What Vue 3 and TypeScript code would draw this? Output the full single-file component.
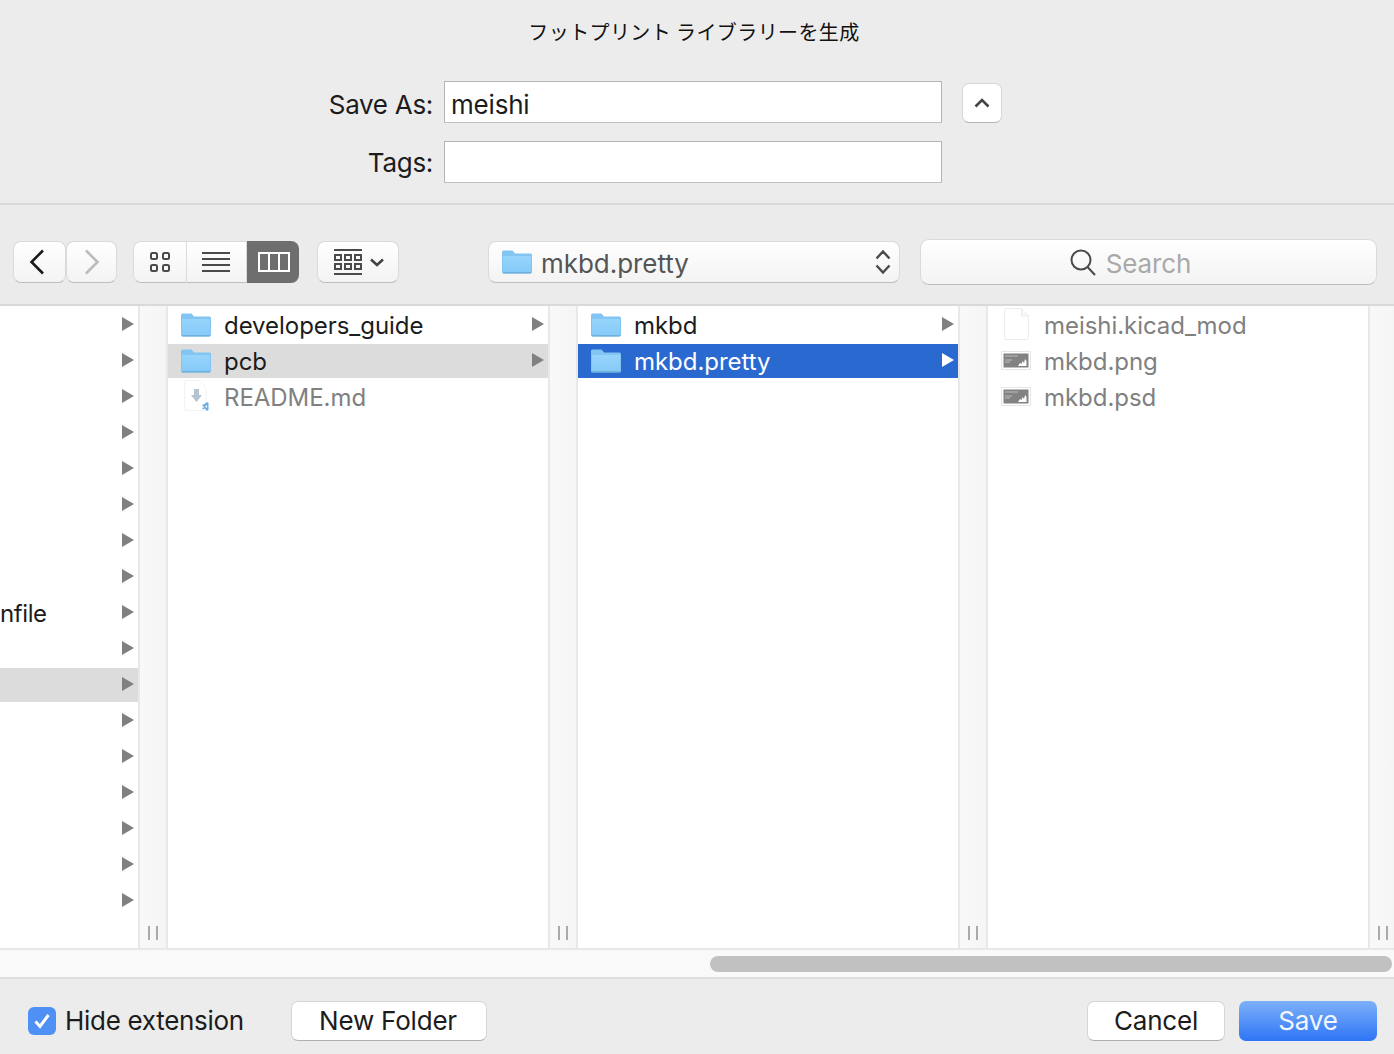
<script setup lang="ts">
interface Row {
  name?: string
  icon?: 'folder' | 'doc' | 'readme' | 'image'
  arrow?: boolean
  state?: 'active' | 'selected'
  dim?: boolean
}

// first column is scrolled away, only the arrows and a name's tail are left
const firstColumn: Row[] = Array.from({ length: 17 }, (_, i) => ({
  arrow: true,
  name: i === 8 ? 'nfile' : undefined,
  state: i === 10 ? 'active' : undefined
}))

const columns: Row[][] = [
  [
    { name: 'developers_guide', icon: 'folder', arrow: true },
    { name: 'pcb', icon: 'folder', arrow: true, state: 'active' },
    { name: 'README.md', icon: 'readme', dim: true }
  ],
  [
    { name: 'mkbd', icon: 'folder', arrow: true },
    { name: 'mkbd.pretty', icon: 'folder', arrow: true, state: 'selected' }
  ],
  [
    { name: 'meishi.kicad_mod', icon: 'doc', dim: true },
    { name: 'mkbd.png', icon: 'image', dim: true },
    { name: 'mkbd.psd', icon: 'image', dim: true }
  ]
]
</script>

<template>
  <div class="dialog">
    <svg class="defs" width="0" height="0" aria-hidden="true">
      <defs>
        <linearGradient id="folderFill" x1="0" y1="0" x2="0" y2="1">
          <stop offset="0" stop-color="#97d4fb" />
          <stop offset="1" stop-color="#85caf8" />
        </linearGradient>
        <symbol id="folder" viewBox="0 0 30 24">
          <path d="M1.5 23.5h27a1.5 1.5 0 0 0 1.5-1.5V5a1.5 1.5 0 0 0-1.500-1.500H13L10.500 .5H1.500A1.500 1.500 0 0 0 0 2V22a1.500 1.500 0 0 0 1.500 1.500z" fill="#82c5f2" />
          <path d="M1 6h28V21.500a1 1 0 0 1-1 1H2a1 1 0 0 1-1-1z" fill="url(#folderFill)" />
          <path d="M1 22h28v.6a1 1 0 0 1-1 1H2a1 1 0 0 1-1-1z" fill="#6fb0dd" />
        </symbol>
      </defs>
    </svg>

    <header class="form">
      <h1 class="title">フットプリント ライブラリーを生成</h1>
      <div class="field save-as">
        <label class="field-label">Save As:</label>
        <div class="text-box">meishi</div>
        <button class="disclose">
          <svg width="16" height="10" viewBox="0 0 16 10"><path d="M1.500 8.500 8 2l6.500 6.500" fill="none" stroke="#444" stroke-width="2.600" /></svg>
        </button>
      </div>
      <div class="field">
        <label class="field-label">Tags:</label>
        <div class="text-box"></div>
      </div>
    </header>

    <div class="toolbar">
      <div class="nav">
        <button class="tool nav-btn prev">
          <svg width="16" height="26" viewBox="0 0 16 26"><path d="M14 1.500 2.500 13 14 24.500" fill="none" stroke="#1a1a1a" stroke-width="2.600" /></svg>
        </button>
        <button class="tool nav-btn next">
          <svg width="16" height="26" viewBox="0 0 16 26"><path d="M2 1.500 13.500 13 2 24.500" fill="none" stroke="#bcbcbc" stroke-width="2.600" /></svg>
        </button>
      </div>

      <div class="views">
        <button class="view view-icons">
          <svg width="22" height="22" viewBox="0 0 22 22" fill="none" stroke="#4a4a4a" stroke-width="2">
            <rect x="2" y="2" width="6" height="6" rx="1.500" />
            <rect x="14" y="2" width="6" height="6" rx="1.500" />
            <rect x="2" y="14" width="6" height="6" rx="1.500" />
            <rect x="14" y="14" width="6" height="6" rx="1.500" />
          </svg>
        </button>
        <button class="view view-list">
          <svg width="28" height="20" viewBox="0 0 28 20" stroke="#4a4a4a" stroke-width="2">
            <path d="M0 1h28M0 7h28M0 13h28M0 19h28" />
          </svg>
        </button>
        <button class="view view-columns">
          <svg width="32" height="20" viewBox="0 0 32 20" fill="none" stroke="#fff" stroke-width="2">
            <rect x="1" y="1" width="30" height="18" />
            <path d="M11 1v18M21 1v18" />
          </svg>
        </button>
      </div>

      <button class="tool group">
        <svg width="28" height="26" viewBox="0 0 28 26" fill="none" stroke="#4a4a4a">
          <path d="M0 1h28M0 25h28" stroke-width="2" />
          <path d="M1 6h6v5H1zM11 6h6v5h-6zM21 6h6v5h-6zM1 15h6v5H1zM11 15h6v5h-6zM21 15h6v5h-6z" stroke-width="2" />
        </svg>
        <svg width="14" height="9" viewBox="0 0 14 9"><path d="M1 1.500 7 7l6-5.500" fill="none" stroke="#444" stroke-width="2.600" /></svg>
      </button>

      <button class="tool popup">
        <svg class="popup-folder" width="30" height="24"><use href="#folder" /></svg>
        <span class="popup-name">mkbd.pretty</span>
        <svg class="updown" width="16" height="26" viewBox="0 0 16 26" fill="none" stroke="#4a4a4a" stroke-width="2.400">
          <path d="M1.500 9.500 8 2.500l6.500 7M1.500 16.500 8 23.500l6.500-7" />
        </svg>
      </button>

      <div class="search">
        <svg width="26" height="27" viewBox="0 0 26 27" fill="none" stroke="#4a4a4a" stroke-width="2">
          <circle cx="11" cy="11" r="9.500" />
          <path d="m17.500 18 7.500 8" />
        </svg>
        <span class="search-text">Search</span>
      </div>
    </div>

    <div class="browser">
      <section class="column first">
        <div v-for="(row, i) in firstColumn" :key="i" class="row" :class="row.state">
          <span v-if="row.name" class="name">{{ row.name }}</span>
          <svg class="arrow" width="12" height="14" viewBox="0 0 12 14"><path d="M0 0l12 7-12 7z" /></svg>
        </div>
      </section>
      <div class="gutter"><i class="handle"></i></div>

      <template v-for="(col, c) in columns" :key="c">
        <section class="column">
          <div v-for="row in col" :key="row.name" class="row" :class="row.state">
            <span class="icon">
              <svg v-if="row.icon === 'folder'" class="folder-icon" width="30" height="24"><use href="#folder" /></svg>
              <svg v-else-if="row.icon === 'doc'" class="doc-icon" width="26" height="32" viewBox="0 0 26 32">
                <path d="M1.500.5h16l7 7.500v21.500a2 2 0 0 1-2 2h-21a1 1 0 0 1-1-1V1.500a1 1 0 0 1 1-1z" fill="#fff" stroke="#ececec" />
                <path d="M17.500.5v7.500h7" fill="#f6f6f6" stroke="#ececec" />
              </svg>
              <svg v-else-if="row.icon === 'readme'" class="doc-icon" width="26" height="32" viewBox="0 0 26 32">
                <path d="M1.500.5h14l6.500 7v22a1 1 0 0 1-1 1h-19.500a1 1 0 0 1-1-1V1.500a1 1 0 0 1 1-1z" fill="#fff" stroke="#f3f3f3" />
                <path d="M10 9h5v6h3l-5.500 7-5.500-7h3z" fill="#b3c4d1" />
                <path d="M20.500 24 23 22l1.500 1v7l-1.500 1-2.500-2.500-1.500 1-1-.8 2-1.700-2-1.700 1-.8zM23 25l-2 1.500 2 1.500z" fill="#6caee6" />
              </svg>
              <svg v-else class="image-icon" width="30" height="19" viewBox="0 0 30 19">
                <rect x=".5" y=".5" width="29" height="18" fill="#fff" stroke="#e6e6e6" />
                <rect x="2.500" y="2.500" width="25" height="14" fill="#828282" />
                <path d="M4 5h13M4 9h7M4 11h5" stroke="#bcbcbc" stroke-width="1" />
                <path d="M17 15l2-3 1.500 1 1-3 1.500 2 1-4 1.500 2v5z" fill="#fff" />
              </svg>
            </span>
            <span class="name" :class="{ dim: row.dim }">{{ row.name }}</span>
            <svg v-if="row.arrow" class="arrow" width="12" height="14" viewBox="0 0 12 14"><path d="M0 0l12 7-12 7z" /></svg>
          </div>
        </section>
        <div class="gutter"><i class="handle"></i></div>
      </template>
    </div>

    <div class="hscroll"><div class="thumb"></div></div>

    <footer class="footer">
      <span class="checkbox">
        <svg width="18" height="16" viewBox="0 0 18 16"><path d="M2.500 8.500 7 13.500 15.500 2" fill="none" stroke="#fff" stroke-width="3" /></svg>
      </span>
      <span class="check-label">Hide extension</span>
      <button class="push new-folder">New Folder</button>
      <button class="push cancel">Cancel</button>
      <button class="push save">Save</button>
    </footer>
  </div>
</template>

<style>
html,
body {
  margin: 0;
  background: #ececec;
}
</style>

<style scoped>
.dialog {
  width: 1394px;
  height: 1054px;
  overflow: hidden;
  display: flex;
  flex-direction: column;
  background: #ececec;
  color: #1c1c1c;
  font-family: Inter, "Liberation Sans", "Noto Sans CJK JP", sans-serif;
  font-size: 26px;
}

.defs {
  position: absolute;
}

button {
  font: inherit;
  color: inherit;
  padding: 0;
  display: flex;
  align-items: center;
  justify-content: center;
}

.form {
  flex: none;
  height: 205px;
  box-sizing: border-box;
  padding-top: 18px;
  border-bottom: 2px solid #d9d9d9;
}

.title {
  margin: 0 0 35px;
  height: 28px;
  padding-right: 6px;
  font: 400 20px/28px "Noto Sans CJK JP", sans-serif;
  letter-spacing: 0.4px;
  text-align: center;
  color: #111;
}

.field {
  display: flex;
  align-items: center;
  height: 42px;
  margin-bottom: 18px;
  padding-left: 300px;
}

.field-label {
  width: 133px;
  text-align: right;
  margin-right: 11px;
  letter-spacing: -0.3px;
}

.save-as .field-label {
  padding-top: 4px;
}

.text-box {
  box-sizing: border-box;
  width: 498px;
  height: 42px;
  padding-left: 6px;
  background: #fff;
  border: 1px solid #b5b5b5;
  border-bottom-color: #c0c0c0;
  line-height: 44px;
  letter-spacing: -0.2px;
}

.save-as .text-box {
  line-height: 46px;
}

.disclose {
  width: 40px;
  height: 40px;
  margin: 2px 0 0 20px;
  background: #fff;
  border: 1px solid #d6d6d6;
  border-bottom-color: #b4b4b4;
  border-radius: 7px;
}

.toolbar {
  flex: none;
  height: 101px;
  box-sizing: border-box;
  padding: 15px 0 0 13px;
  display: flex;
  align-items: center;
  background: #ebebeb;
  border-bottom: 2px solid #d9d9d9;
}

.tool {
  box-sizing: border-box;
  height: 42px;
  background: linear-gradient(#ffffff, #f3f3f3);
  border: 1px solid #dadada;
  border-bottom-color: #bdbdbd;
  border-radius: 8px;
}

.nav {
  display: flex;
}

.nav-btn {
  width: 53px;
}

.nav-btn.prev svg {
  margin-right: 6px;
}

.nav-btn.next {
  width: 51px;
}

.views {
  display: flex;
  height: 42px;
  margin-left: 16px;
  box-sizing: border-box;
  border-radius: 8px;
  overflow: hidden;
}

.view {
  box-sizing: border-box;
  height: 42px;
  border: 1px solid #dadada;
  border-bottom-color: #bdbdbd;
  border-left: 0;
  background: linear-gradient(#ffffff, #f3f3f3);
}

.view-icons {
  width: 54px;
  border-left: 1px solid #dadada;
  border-radius: 8px 0 0 8px;
}

.view-list {
  width: 60px;
}

.view-list svg {
  margin-right: 2px;
}

.view-columns {
  width: 52px;
  border: 0;
  background: #6e6e6e;
}

.view-columns svg {
  margin-left: 2px;
}

.group {
  width: 82px;
  margin-left: 18px;
  padding-left: 2px;
  gap: 8px;
}

.popup {
  width: 412px;
  margin-left: 89px;
  padding: 0 8px 0 13px;
  justify-content: flex-start;
}

.popup-folder {
  margin-right: 9px;
}

.popup-name {
  color: #555;
  flex: 1;
  text-align: left;
  padding-top: 2px;
  letter-spacing: -0.05px;
}

.search {
  box-sizing: border-box;
  width: 457px;
  height: 46px;
  margin-left: 20px;
  padding-right: 39px;
  display: flex;
  align-items: center;
  justify-content: center;
  gap: 10px;
  background: linear-gradient(#ffffff, #f3f3f3);
  border: 1px solid #dadada;
  border-bottom-color: #bdbdbd;
  border-radius: 9px;
}

.search svg {
  margin-left: 3px;
}

.search-text {
  color: #a9a9a9;
  padding-top: 2px;
  letter-spacing: -0.1px;
}

.browser {
  flex: none;
  height: 644px;
  box-sizing: border-box;
  display: flex;
  background: #fff;
  border-bottom: 2px solid #e8e8e8;
  font-size: 24px;
}

.column {
  flex: none;
  width: 380px;
  overflow: hidden;
}

.column.first {
  width: 138px;
}

.row {
  position: relative;
  height: 34px;
  margin-top: 2px;
  display: flex;
  align-items: center;
  padding-left: 13px;
}

.first .row {
  padding-left: 0;
}

.row.active {
  background: #dcdcdc;
}

.row.selected {
  background: #2a69d0;
  color: #fff;
}

.icon {
  width: 43px;
  display: flex;
}

.folder-icon {
  margin-top: -1px;
}

.doc-icon {
  margin: -2px 0 0 3px;
}

.image-icon {
  margin-top: -1px;
}

.name {
  line-height: 34px;
  margin-top: 2px;
  white-space: nowrap;
  letter-spacing: -0.05px;
}

.first .name {
  letter-spacing: -0.4px;
}

.name.dim {
  color: #808080;
}

.arrow {
  position: absolute;
  right: 4px;
  top: 9px;
  fill: #808080;
}

.selected .arrow {
  fill: #fff;
}

.gutter {
  flex: none;
  box-sizing: border-box;
  width: 30px;
  display: flex;
  align-items: flex-end;
  padding: 0 0 8px 8px;
  background: linear-gradient(90deg, #f9f9f9, #f5f5f5);
  border-left: 2px solid #e8e8e8;
  border-right: 2px solid #e8e8e8;
}

.handle {
  box-sizing: border-box;
  width: 10px;
  height: 14px;
  border-left: 2px solid #aaa;
  border-right: 2px solid #aaa;
}

.hscroll {
  flex: none;
  box-sizing: border-box;
  height: 29px;
  padding: 6px 2px 0 710px;
  background: #f9f9f9;
  border-bottom: 2px solid #dedede;
}

.thumb {
  height: 16px;
  border-radius: 8px;
  background: #c1c1c1;
}

.footer {
  flex: 1;
  display: flex;
  align-items: center;
  padding: 9px 17px 0 28px;
}

.checkbox {
  width: 28px;
  height: 28px;
  border-radius: 6px;
  background: #4f90f4;
  display: flex;
  align-items: center;
  justify-content: center;
}

.check-label {
  margin: -1px 0 0 9px;
  width: 178px;
  white-space: nowrap;
  letter-spacing: -0.3px;
}

.push {
  box-sizing: border-box;
  height: 40px;
  padding-bottom: 1px;
  background: #fff;
  border: 1px solid #d6d6d6;
  border-bottom-color: #b0b0b0;
  border-radius: 7px;
  letter-spacing: -0.2px;
}

.new-folder {
  width: 196px;
  margin-left: 48px;
  margin-right: auto;
  padding-right: 2px;
}

.cancel {
  width: 138px;
}

.save {
  width: 138px;
  margin-left: 14px;
  border: 0;
  color: #f2f6ff;
  background: linear-gradient(#7db1f8, #2e75f6);
}
</style>
